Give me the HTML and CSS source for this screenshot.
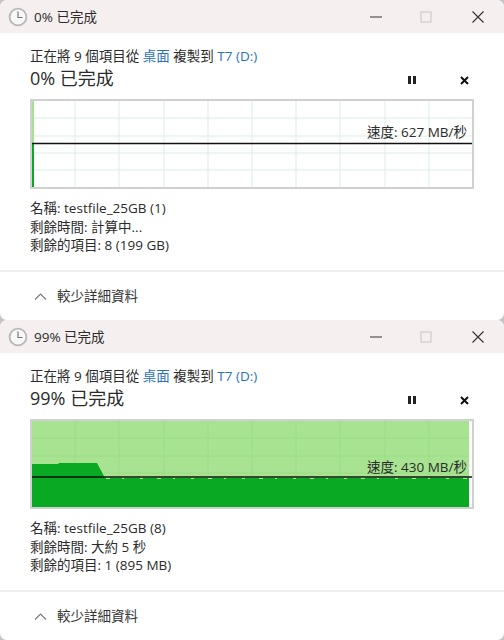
FILE: index.html
```html
<!DOCTYPE html>
<html lang="zh-Hant">
<head>
  <meta charset="UTF-8">
  <meta name="viewport" content="width=device-width, initial-scale=1.0">
  <title>複製進度</title>
  <link rel="stylesheet" href="styles.css">
</head>
<body>
  <section class="window">
    <header class="titlebar">
      <svg class="clock" width="20" height="20" viewBox="0 0 20 20"><circle cx="10" cy="10" r="8.4" fill="#f7f7f7" stroke="#b8b8b8" stroke-width="1.8"/><path d="M10 4.5V10.5H14.5" fill="none" stroke="#777" stroke-width="1.2"/></svg>
      <span class="title">0% 已完成</span>
      <svg class="btn-min" width="12" height="2" viewBox="0 0 12 2"><path d="M0 1H12" stroke="#333" stroke-width="1.2"/></svg>
      <svg class="btn-max" width="12" height="12" viewBox="0 0 12 12"><rect x="1" y="1" width="10" height="10" fill="none" stroke="#cfcaca" stroke-width="1.2"/></svg>
      <svg class="btn-close" width="12" height="12" viewBox="0 0 12 12"><path d="M0.5 0.5L11.5 11.5M11.5 0.5L0.5 11.5" stroke="#333" stroke-width="1.1"/></svg>
    </header>
    <div class="body">
      <p class="status">正在將 9 個項目從 <a class="link">桌面</a> 複製到 <a class="link">T7 (D:)</a></p>
      <div class="heading-row">
        <h1>0% 已完成</h1>
        <svg class="pause" width="8" height="8" viewBox="0 0 8 8"><path d="M0 0H3V8H0ZM5 0H8V8H5Z" fill="#222"/></svg>
        <svg class="stop" width="9" height="9" viewBox="0 0 9 9"><path d="M1 1L8 8M8 1L1 8" stroke="#111" stroke-width="2"/></svg>
      </div>
      <div class="graph">
        <svg width="440" height="86" viewBox="0 0 440 86">
          <path d="M43 0V86M87 0V86M132 0V86M176 0V86M220 0V86M264 0V86M308 0V86M353 0V86M397 0V86M0 17H440M0 35H440M0 52H440M0 69H440" stroke="#dcede2" stroke-width="1"/>
          <rect x="0" y="0" width="2" height="42" fill="#a5e38f"/>
          <rect x="0" y="42" width="2" height="44" fill="#0aa924"/>
          <path d="M0 42.5H440" stroke="#111" stroke-width="1.3"/>
        </svg>
        <span class="speed speed-low">速度: 627 MB/秒</span>
      </div>
      <ul class="details">
        <li>名稱: testfile_25GB (1)</li>
        <li>剩餘時間: 計算中...</li>
        <li>剩餘的項目: 8 (199 GB)</li>
      </ul>
    </div>
    <footer class="footer">
      <svg class="chevron" width="13" height="7" viewBox="0 0 13 7"><path d="M1 6.5L6.5 1L12 6.5" fill="none" stroke="#777" stroke-width="1.1"/></svg>
      <span class="footer-label">較少詳細資料</span>
    </footer>
  </section>

  <section class="window">
    <header class="titlebar">
      <svg class="clock" width="20" height="20" viewBox="0 0 20 20"><circle cx="10" cy="10" r="8.4" fill="#f7f7f7" stroke="#b8b8b8" stroke-width="1.8"/><path d="M10 4.5V10.5H14.5" fill="none" stroke="#777" stroke-width="1.2"/></svg>
      <span class="title">99% 已完成</span>
      <svg class="btn-min" width="12" height="2" viewBox="0 0 12 2"><path d="M0 1H12" stroke="#333" stroke-width="1.2"/></svg>
      <svg class="btn-max" width="12" height="12" viewBox="0 0 12 12"><rect x="1" y="1" width="10" height="10" fill="none" stroke="#cfcaca" stroke-width="1.2"/></svg>
      <svg class="btn-close" width="12" height="12" viewBox="0 0 12 12"><path d="M0.5 0.5L11.5 11.5M11.5 0.5L0.5 11.5" stroke="#333" stroke-width="1.1"/></svg>
    </header>
    <div class="body">
      <p class="status">正在將 9 個項目從 <a class="link">桌面</a> 複製到 <a class="link">T7 (D:)</a></p>
      <div class="heading-row">
        <h1>99% 已完成</h1>
        <svg class="pause" width="8" height="8" viewBox="0 0 8 8"><path d="M0 0H3V8H0ZM5 0H8V8H5Z" fill="#222"/></svg>
        <svg class="stop" width="9" height="9" viewBox="0 0 9 9"><path d="M1 1L8 8M8 1L1 8" stroke="#111" stroke-width="2"/></svg>
      </div>
      <div class="graph">
        <svg width="440" height="86" viewBox="0 0 440 86">
          <rect x="0" y="0" width="437" height="86" fill="#a7e391"/>
          <path d="M43 0V86M87 0V86M132 0V86M176 0V86M220 0V86M264 0V86M308 0V86M353 0V86M397 0V86M0 17H437M0 35H437M0 52H437" stroke="#9bdc88" stroke-width="1"/>
          <path d="M0 43H26L27 42H65L73 57H437V86H0Z" fill="#0aa924"/>
          <path d="M74 57.5H437" stroke="#a7e391" stroke-width="1" stroke-dasharray="4 12 2 16 3 14"/>
          <path d="M0 56H440" stroke="#111" stroke-width="1.3"/>
        </svg>
        <span class="speed speed-high">速度: 430 MB/秒</span>
      </div>
      <ul class="details">
        <li>名稱: testfile_25GB (8)</li>
        <li>剩餘時間: 大約 5 秒</li>
        <li>剩餘的項目: 1 (895 MB)</li>
      </ul>
    </div>
    <footer class="footer">
      <svg class="chevron" width="13" height="7" viewBox="0 0 13 7"><path d="M1 6.5L6.5 1L12 6.5" fill="none" stroke="#777" stroke-width="1.1"/></svg>
      <span class="footer-label">較少詳細資料</span>
    </footer>
  </section>
</body>
</html>
```

FILE: styles.css
```css
* {
  box-sizing: border-box;
}
body {
  margin: 0;
  width: 504px;
  height: 640px;
  overflow: hidden;
  background: #c4c4c4;
  color: #2b2b2b;
  font-family: "Open Sans", "Noto Sans CJK TC", sans-serif;
  font-size: 13.5px;
}
.window {
  height: 320px;
  display: flex;
  flex-direction: column;
  background: #fff;
  border-radius: 7px;
  overflow: hidden;
}
.titlebar {
  height: 33px;
  flex: none;
  display: flex;
  align-items: center;
  padding-left: 8px;
  background: #f6efef;
}
.clock {
  margin-right: 6px;
}
.title {
  flex: 1;
  padding-bottom: 2px;
}
.btn-min {
  margin-right: 38px;
}
.btn-max {
  margin-right: 40px;
}
.btn-close {
  margin-right: 20px;
}
.body {
  flex: 1;
  padding: 14px 30px 0;
}
.status {
  margin: 0;
  height: 18px;
  line-height: 18px;
}
.link {
  color: #2a72bd;
}
.heading-row {
  height: 26px;
  display: flex;
  align-items: center;
}
h1 {
  flex: 1;
  margin: 0;
  font-size: 18px;
  font-weight: 400;
  line-height: 24px;
}
.pause {
  margin: 4px 44px 0 0;
}
.stop {
  margin: 4px 5px 0 0;
}
.graph {
  position: relative;
  width: 444px;
  height: 90px;
  margin-top: 8px;
  border: 2px solid #d0d0d0;
}
.graph svg {
  display: block;
}
.speed {
  position: absolute;
  right: 5px;
  line-height: 16px;
}
.speed-low {
  top: 23px;
}
.speed-high {
  top: 38px;
}
.details {
  list-style: none;
  margin: 10px 0 0;
  padding: 0;
  line-height: 18.5px;
}
.footer {
  height: 50px;
  flex: none;
  display: flex;
  align-items: center;
  padding-left: 34px;
  border-top: 2px solid #f0f0f0;
  color: #333;
}
.chevron {
  margin-right: 10px;
}
.footer-label {
  padding-bottom: 2px;
}
```
